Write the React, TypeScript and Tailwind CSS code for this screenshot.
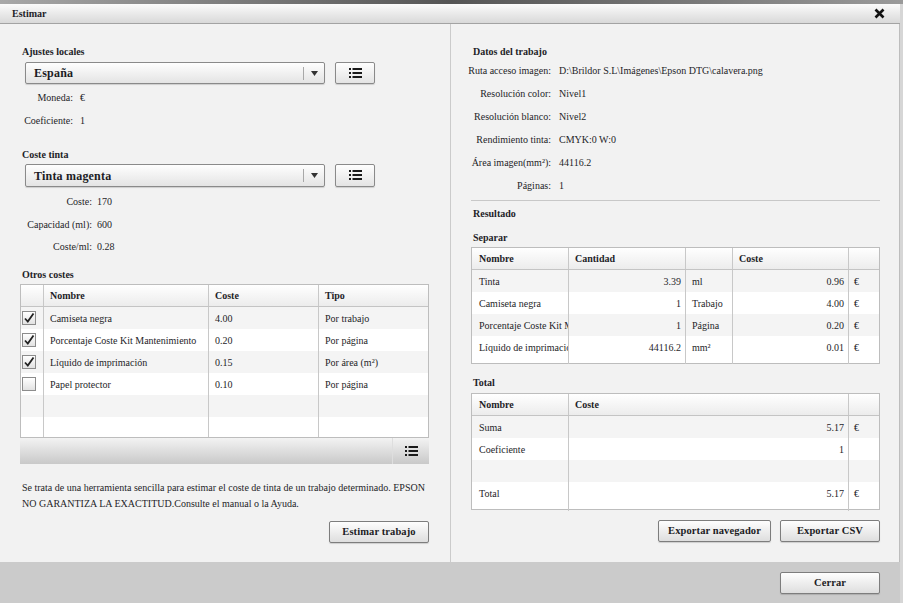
import React from "react";

function ListIcon() {
  return (
    <svg width="13" height="11" viewBox="0 0 13 11">
      {[1, 5, 9].map((y) => (
        <g key={y} fill="#1a1a1a">
          <rect x="0" y={y - 1} width="2" height="2" />
          <rect x="3.5" y={y - 1} width="9.5" height="2" />
        </g>
      ))}
    </svg>
  );
}

function Btn({ children, w }: { children: React.ReactNode; w: string }) {
  return (
    <div
      className={`${w} h-[22px] flex items-center justify-center border border-[#7d7d7d] rounded-[2px] bg-gradient-to-b from-[#fefefe] to-[#dedede] shadow-[0_1px_1px_rgba(0,0,0,0.15)] text-[10.5px] font-bold text-[#1c1c24] tracking-[0.1px]`}
    >
      {children}
    </div>
  );
}

function Select({ label }: { label: string }) {
  return (
    <div className="flex items-center h-full">
      <div className="w-[300px] h-full flex items-center border border-[#8a8a8a] rounded-[2px] bg-gradient-to-b from-[#fefefe] to-[#e4e4e4] shadow-[0_1px_1px_rgba(0,0,0,0.15)]">
        <div className="flex-1 pl-[8px] text-[12px] font-bold text-[#1c1c24] tracking-[0.2px]">{label}</div>
        <div className="w-px h-[13px] bg-[#a8a8a8]" />
        <div className="w-[20px] flex justify-center">
          <svg width="7" height="5" viewBox="0 0 7 5">
            <path d="M0 0 L7 0 L3.5 5 Z" fill="#333" />
          </svg>
        </div>
      </div>
      <div className="ml-[10px] w-[40px] h-full flex items-center justify-center border border-[#8a8a8a] rounded-[2px] bg-gradient-to-b from-[#fefefe] to-[#e4e4e4] shadow-[0_1px_1px_rgba(0,0,0,0.15)]">
        <ListIcon />
      </div>
    </div>
  );
}

function Check({ on }: { on: boolean }) {
  return (
    <div className="w-[14px] h-[14px] border border-[#8c8c8c] bg-gradient-to-b from-[#ffffff] to-[#e2e2e2] flex items-center justify-center">
      {on && (
        <svg width="12" height="12" viewBox="0 0 12 12">
          <path d="M2 6.5 L4.8 9.5 L10.5 1.5" stroke="#222" strokeWidth="1.8" fill="none" />
        </svg>
      )}
    </div>
  );
}

const otros = [
  { on: true, n: "Camiseta negra", c: "4.00", t: "Por trabajo" },
  { on: true, n: "Porcentaje Coste Kit Mantenimiento", c: "0.20", t: "Por página" },
  { on: true, n: "Líquido de imprimación", c: "0.15", t: "Por área (m²)" },
  { on: false, n: "Papel protector", c: "0.10", t: "Por página" },
  null,
  null,
];

const sep = [
  ["Tinta", "3.39", "ml", "0.96", "€"],
  ["Camiseta negra", "1", "Trabajo", "4.00", "€"],
  ["Porcentaje Coste Kit Mantenimiento", "1", "Página", "0.20", "€"],
  ["Líquido de imprimación", "44116.2", "mm²", "0.01", "€"],
];

const tot = [
  ["Suma", "5.17", "€"],
  ["Coeficiente", "1", ""],
  ["", "", ""],
  ["Total", "5.17", "€"],
];

const hdr = "h-[22px] bg-gradient-to-b from-[#ffffff] to-[#ececec] border-b border-[#c4c4c4] font-bold";
const cell = "border-r border-[#c8c8c8] overflow-hidden whitespace-nowrap flex items-center";

export default function App() {
  return (
    <div className="w-[903px] h-[603px] bg-[#d6d6d6] text-[10px] text-[#1e1e28] overflow-hidden font-['Liberation_Serif','Times_New_Roman',serif]">
      <div className="h-[4px] bg-gradient-to-r from-[#a8a8a8] via-[#555555] to-[#9a9a9a]" />
      <div className="w-[900px] flex flex-col h-[599px]">
        <div className="h-[20px] flex items-center justify-between bg-gradient-to-b from-[#fbfbfb] to-[#d9d9d9] border-b border-[#a3a3a3] pl-[12px] pr-[15px]">
          <div className="font-bold text-[10px]">Estimar</div>
          <svg width="11" height="11" viewBox="0 0 11 11">
            <path d="M1.5 1.5 L9.5 9.5 M9.5 1.5 L1.5 9.5" stroke="#111" strokeWidth="2.6" />
          </svg>
        </div>
        <div className="h-[538px] flex bg-[#f2f2f2]">
          {/* Left */}
          <div className="w-[451px] border-r border-[#cbcbcb] pl-[20px] pr-[21px] pt-[21px] flex flex-col">
            <div className="h-[14px] leading-[14px] pl-[2px] font-bold">Ajustes locales</div>
            <div className="mt-[3px] h-[22px] pl-[5px]">
              <Select label="España" />
            </div>
            <div className="mt-[2px]">
              {[
                ["Moneda:", "€"],
                ["Coeficiente:", "1"],
              ].map(([a, b]) => (
                <div key={a} className="h-[23px] flex items-center">
                  <div className="w-[53px] text-right whitespace-nowrap">{a}</div>
                  <div className="pl-[7px]">{b}</div>
                </div>
              ))}
            </div>
            <div className="mt-[16px] h-[14px] leading-[14px] pl-[2px] font-bold">Coste tinta</div>
            <div className="mt-[2px] h-[23px] pl-[5px]">
              <Select label="Tinta magenta" />
            </div>
            <div className="mt-[3px]">
              {[
                ["Coste:", "170", "h-[23px]"],
                ["Capacidad (ml):", "600", "h-[22px]"],
                ["Coste/ml:", "0.28", "h-[22px]"],
              ].map(([a, b, h]) => (
                <div key={a} className={`${h} flex items-center`}>
                  <div className="w-[72px] text-right whitespace-nowrap">{a}</div>
                  <div className="pl-[5px]">{b}</div>
                </div>
              ))}
            </div>
            <div className="mt-[11px] h-[14px] leading-[14px] pl-[2px] font-bold">Otros costes</div>
            <div className="mt-[2px] border border-[#bdbdbd] bg-white">
              <div className={`${hdr} grid grid-cols-[23px_165px_110px_1fr]`}>
                <div className={cell}></div>
                <div className={`${cell} pl-[6px]`}>Nombre</div>
                <div className={`${cell} pl-[6px]`}>Coste</div>
                <div className="flex items-center pl-[6px]">Tipo</div>
              </div>
              {otros.map((r, i) => (
                <div
                  key={i}
                  className={`${i === 5 ? "h-[20px]" : "h-[22px]"} grid grid-cols-[23px_165px_110px_1fr] ${i % 2 === 0 ? "bg-[#f4f4f4]" : "bg-white"}`}
                >
                  <div className={`${cell} pl-[1px]`}>{r && <Check on={r.on} />}</div>
                  <div className={`${cell} pl-[6px]`}>{r?.n}</div>
                  <div className={`${cell} pl-[6px]`}>{r?.c}</div>
                  <div className="flex items-center pl-[6px]">{r?.t}</div>
                </div>
              ))}
            </div>
            <div className="h-[26px] flex justify-end bg-gradient-to-b from-[#f3f3f3] to-[#c9c9c9]">
              <div className="w-[37px] border-l border-[#dedede] flex items-center justify-center">
                <ListIcon />
              </div>
            </div>
            <div className="mt-[16px] pl-[2px] leading-[16px]">
              Se trata de una herramienta sencilla para estimar el coste de tinta de un trabajo determinado. EPSON NO
              GARANTIZA LA EXACTITUD.Consulte el manual o la Ayuda.
            </div>
            <div className="mt-[9px] flex justify-end">
              <Btn w="w-[100px]">Estimar trabajo</Btn>
            </div>
          </div>
          {/* Right */}
          <div className="flex-1 border-r border-[#bdbdbd] pl-[20px] pr-[19px] pt-[21px] flex flex-col">
            <div className="h-[14px] leading-[14px] pl-[2px] font-bold">Datos del trabajo</div>
            <div>
              {[
                ["Ruta acceso imagen:", "D:\\Brildor S.L\\Imágenes\\Epson DTG\\calavera.png"],
                ["Resolución color:", "Nivel1"],
                ["Resolución blanco:", "Nivel2"],
                ["Rendimiento tinta:", "CMYK:0 W:0"],
                ["Área imagen(mm²):", "44116.2"],
                ["Páginas:", "1"],
              ].map(([a, b]) => (
                <div key={a} className="h-[23px] flex items-center">
                  <div className="w-[80px] flex justify-end whitespace-nowrap">{a}</div>
                  <div className="pl-[8px] whitespace-nowrap">{b}</div>
                </div>
              ))}
            </div>
            <div className="mt-[3px] h-px bg-[#c8c8c8]" />
            <div className="mt-[6px] h-[14px] leading-[14px] pl-[2px] font-bold">Resultado</div>
            <div className="mt-[10px] h-[14px] leading-[14px] pl-[2px] font-bold">Separar</div>
            <div className="mt-[2px] border border-[#bdbdbd] bg-white h-[117px]">
              <div className={`${hdr} grid grid-cols-[97px_117px_47px_116px_1fr]`}>
                <div className={`${cell} pl-[7px]`}>Nombre</div>
                <div className={`${cell} pl-[6px]`}>Cantidad</div>
                <div className={cell}></div>
                <div className={`${cell} pl-[6px]`}>Coste</div>
                <div></div>
              </div>
              {sep.map((r, i) => (
                <div
                  key={i}
                  className={`h-[22px] grid grid-cols-[97px_117px_47px_116px_1fr] ${i % 2 === 0 ? "bg-[#f4f4f4]" : "bg-white"}`}
                >
                  <div className={`${cell} pl-[7px]`}>{r[0]}</div>
                  <div className={`${cell} justify-end pr-[4px]`}>{r[1]}</div>
                  <div className={`${cell} pl-[6px]`}>{r[2]}</div>
                  <div className={`${cell} justify-end pr-[4px]`}>{r[3]}</div>
                  <div className="flex items-center pl-[5px]">{r[4]}</div>
                </div>
              ))}
              <div className="h-[6px] grid grid-cols-[97px_117px_47px_116px_1fr]">
                <div className={cell}></div>
                <div className={cell}></div>
                <div className={cell}></div>
                <div className={cell}></div>
                <div></div>
              </div>
            </div>
            <div className="mt-[12px] h-[14px] leading-[14px] pl-[2px] font-bold">Total</div>
            <div className="mt-[3px] border border-[#bdbdbd] bg-white h-[117px]">
              <div className={`${hdr} grid grid-cols-[97px_280px_1fr]`}>
                <div className={`${cell} pl-[7px]`}>Nombre</div>
                <div className={`${cell} pl-[6px]`}>Coste</div>
                <div></div>
              </div>
              {tot.map((r, i) => (
                <div
                  key={i}
                  className={`h-[22px] grid grid-cols-[97px_280px_1fr] ${i % 2 === 0 ? "bg-[#f4f4f4]" : "bg-white"}`}
                >
                  <div className={`${cell} pl-[7px]`}>{r[0]}</div>
                  <div className={`${cell} justify-end pr-[4px]`}>{r[1]}</div>
                  <div className="flex items-center pl-[5px]">{r[2]}</div>
                </div>
              ))}
              <div className="h-[7px] grid grid-cols-[97px_280px_1fr]">
                <div className={cell}></div>
                <div className={cell}></div>
                <div></div>
              </div>
            </div>
            <div className="mt-[10px] flex justify-end gap-[9px]">
              <Btn w="w-[113px]">Exportar navegador</Btn>
              <Btn w="w-[100px]">Exportar CSV</Btn>
            </div>
          </div>
        </div>
        <div className="h-[41px] bg-[#cbcbcb] flex items-start justify-end pt-[10px] pr-[20px]">
          <Btn w="w-[100px]">Cerrar</Btn>
        </div>
      </div>
    </div>
  );
}
